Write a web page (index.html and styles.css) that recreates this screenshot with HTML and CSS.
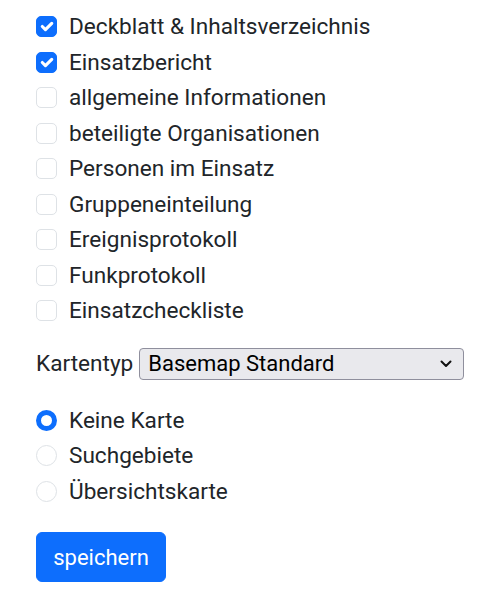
FILE: index.html
```html
<!DOCTYPE html>
<html lang="de">
<head>
<meta charset="utf-8">
<link rel="stylesheet" href="styles.css">
</head>
<body>
<form class="page">
  <div class="checks">
    <label class="check"><span class="box box-on"><svg viewBox="0 0 20 20" width="21" height="21"><path d="M6 10l3 3l6-6" fill="none" stroke="#fff" stroke-width="3" stroke-linecap="round" stroke-linejoin="round"/></svg></span>Deckblatt &amp; Inhaltsverzeichnis</label>
    <label class="check"><span class="box box-on"><svg viewBox="0 0 20 20" width="21" height="21"><path d="M6 10l3 3l6-6" fill="none" stroke="#fff" stroke-width="3" stroke-linecap="round" stroke-linejoin="round"/></svg></span>Einsatzbericht</label>
    <label class="check"><span class="box"></span>allgemeine Informationen</label>
    <label class="check"><span class="box"></span>beteiligte Organisationen</label>
    <label class="check"><span class="box"></span>Personen im Einsatz</label>
    <label class="check"><span class="box"></span>Gruppeneinteilung</label>
    <label class="check"><span class="box"></span>Ereignisprotokoll</label>
    <label class="check"><span class="box"></span>Funkprotokoll</label>
    <label class="check"><span class="box"></span>Einsatzcheckliste</label>
  </div>
  <div class="map-row">
    <span class="map-label">Kartentyp</span>
    <div class="select">
      <span>Basemap Standard</span>
      <svg class="chev" viewBox="0 0 12 8" width="12" height="8"><path d="M1.5 1.5l4.5 4.5l4.5-4.5" fill="none" stroke="#111" stroke-width="2" stroke-linecap="round" stroke-linejoin="round"/></svg>
    </div>
  </div>
  <div class="radios">
    <label class="check"><span class="radio radio-on"></span>Keine Karte</label>
    <label class="check"><span class="radio"></span>Suchgebiete</label>
    <label class="check"><span class="radio"></span>Übersichtskarte</label>
  </div>
  <div class="actions">
    <button type="button" class="btn">speichern</button>
  </div>
</form>
</body>
</html>
```
FILE: styles.css
```css
html, body {
  margin: 0;
  padding: 0;
  background: #fff;
}
body {
  font-family: Roboto, "Liberation Sans", sans-serif;
  font-size: 22.6px;
  color: #212529;
}
.page {
  padding: 10px 17px 0 36px;
  display: flex;
  flex-direction: column;
}
.checks, .radios {
  display: flex;
  flex-direction: column;
}
.check {
  display: flex;
  align-items: center;
  height: 33px;
  margin-bottom: 2.5px;
  gap: 12px;
  line-height: 33px;
}
.box {
  width: 21px;
  height: 21px;
  box-sizing: border-box;
  border: 1px solid #dee2e6;
  border-radius: 5px;
  background: #fff;
  display: flex;
  flex-shrink: 0;
}
.box-on {
  background: #0d6efd;
  border-color: #0d6efd;
}
.box svg {
  margin: -1px;
}
.radio {
  width: 21px;
  height: 21px;
  box-sizing: border-box;
  border: 1px solid #dee2e6;
  border-radius: 50%;
  background: #fff;
  flex-shrink: 0;
}
.radio-on {
  border: 5.5px solid #0d6efd;
}
.map-row {
  display: flex;
  align-items: center;
  margin-top: 18px;
  margin-bottom: 24px;
  gap: 6px;
}
.select {
  flex: 1;
  height: 32px;
  box-sizing: border-box;
  border: 1px solid #8f8f9d;
  border-radius: 4px;
  background: #e9e9ed;
  color: #000;
  font-size: 22px;
  display: flex;
  align-items: center;
  justify-content: space-between;
  padding: 0 11px 0 8px;
}
.actions {
  margin-top: 22px;
}
.btn {
  font-family: Roboto, "Liberation Sans", sans-serif;
  font-size: 22px;
  color: #fff;
  background: #0d6efd;
  border: 1px solid #0d6efd;
  border-radius: 6px;
  height: 50px;
  width: 130px;
  padding: 0;
}
```
